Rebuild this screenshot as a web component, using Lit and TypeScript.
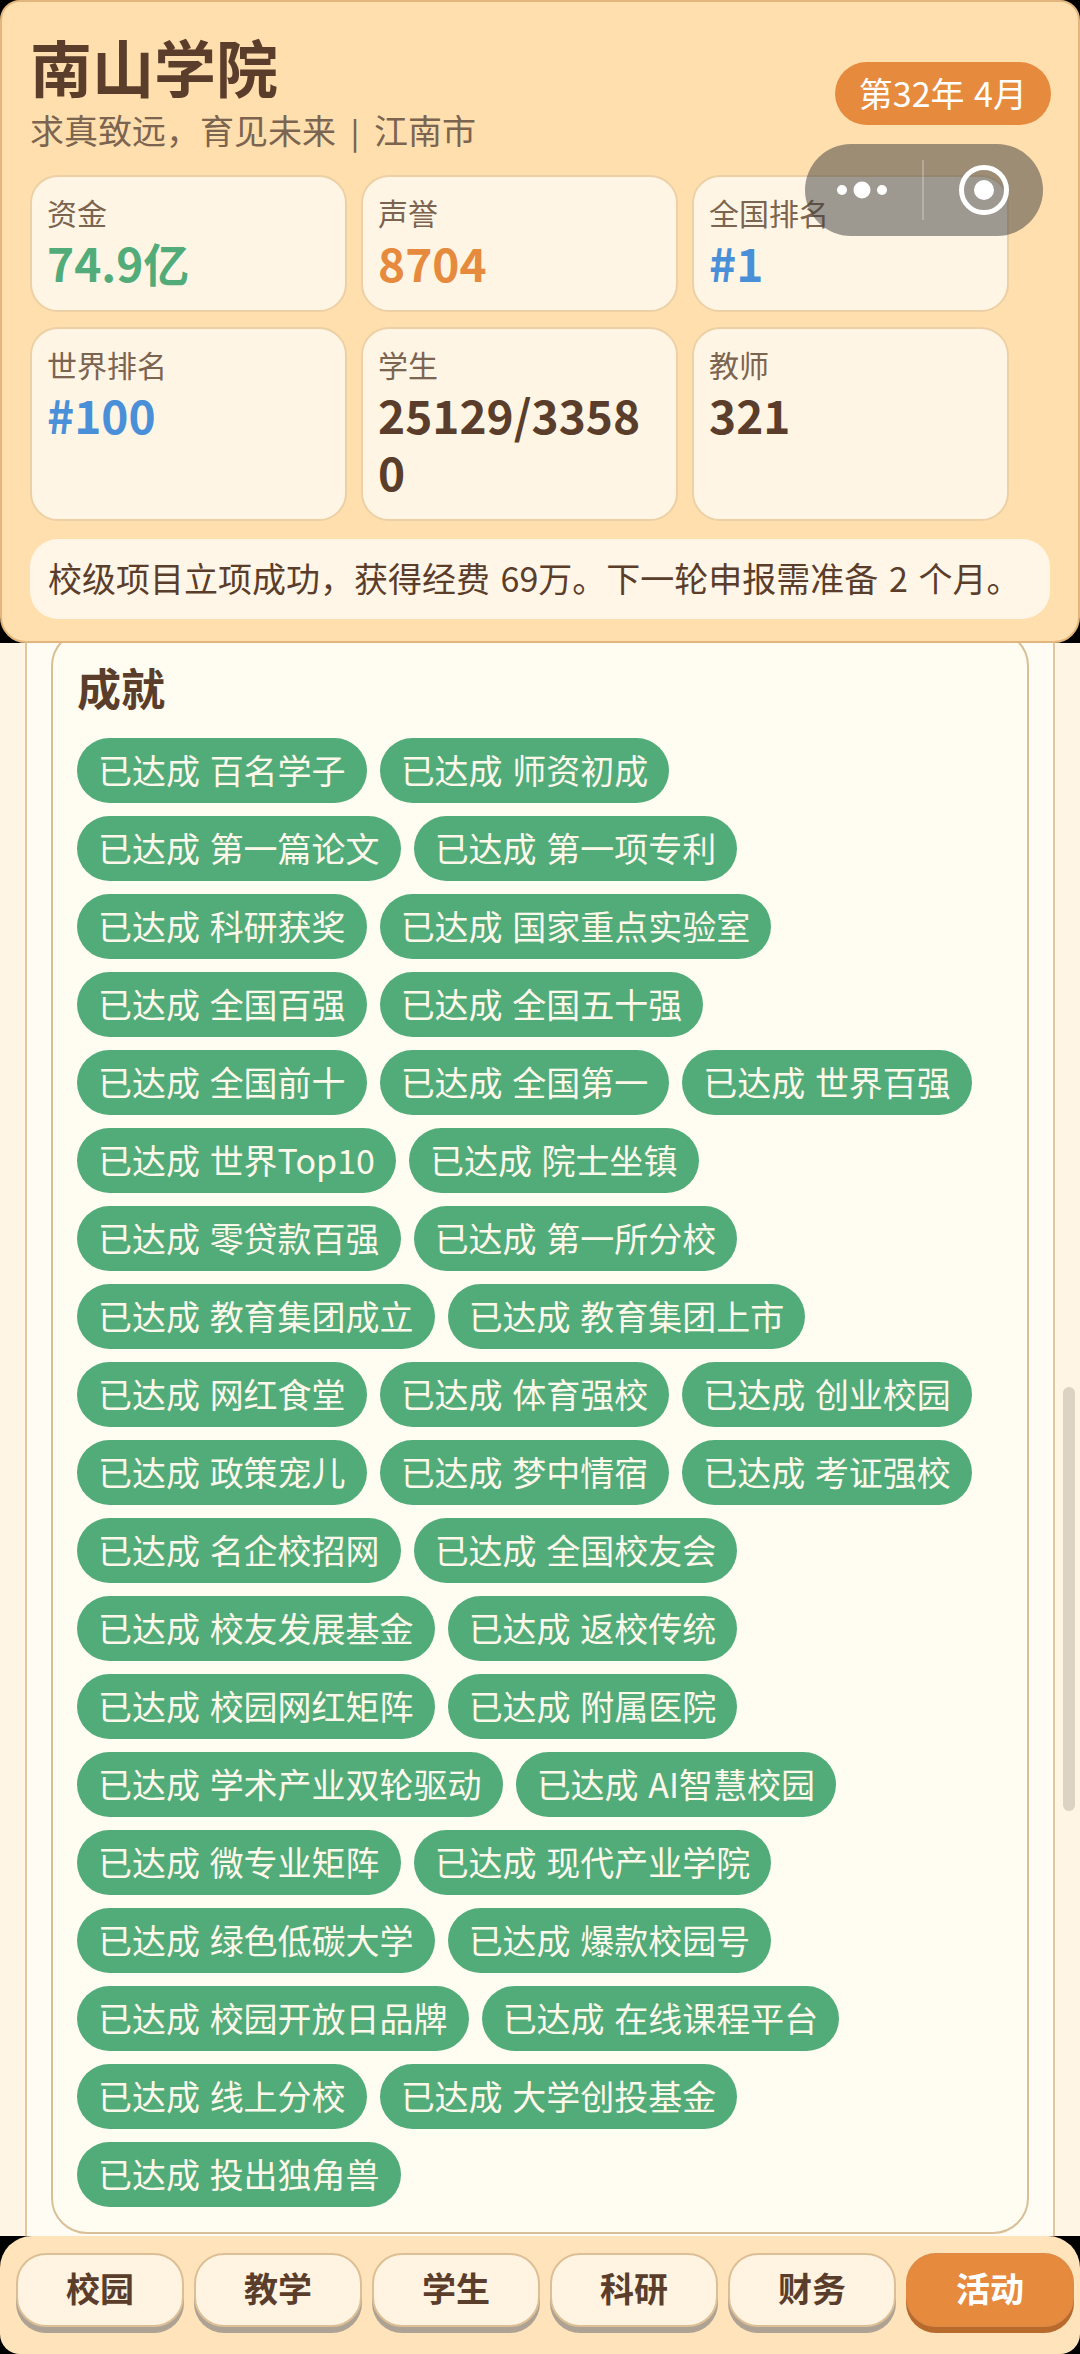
import { LitElement, html, css } from "lit";
import { customElement } from "lit/decorators.js";

const rows: string[] = [
  "百名学子","师资初成","第一篇论文","第一项专利","科研获奖","国家重点实验室","全国百强","全国五十强",
  "全国前十","全国第一","世界百强","世界Top10","院士坐镇","零贷款百强","第一所分校","教育集团成立","教育集团上市",
  "网红食堂","体育强校","创业校园","政策宠儿","梦中情宿","考证强校","名企校招网","全国校友会","校友发展基金","返校传统",
  "校园网红矩阵","附属医院","学术产业双轮驱动","AI智慧校园","微专业矩阵","现代产业学院","绿色低碳大学","爆款校园号",
  "校园开放日品牌","在线课程平台","线上分校","大学创投基金","投出独角兽",
];
const stats = [
  { l: "资金", v: "74.9亿", c: "green" },
  { l: "声誉", v: "8704", c: "orange" },
  { l: "全国排名", v: "#1", c: "blue" },
  { l: "世界排名", v: "#100", c: "blue" },
  { l: "学生", v: "25129/33580", c: "" },
  { l: "教师", v: "321", c: "" },
];
const tabs = ["校园","教学","学生","科研","财务","活动"];

@customElement("app-root")
export class AppRoot extends LitElement {
  static styles = css`
    :host {
      display: block; width: 1080px; height: 2354px; position: relative; overflow: hidden; background: #000;
      font-family: "Noto Sans CJK SC", "Noto Sans", sans-serif; color: #5a3e2b;
    }
    * { box-sizing: border-box; }
    .screen { height: 100%; display: flex; flex-direction: column; }
    header {
      position: relative; z-index: 2; flex: none; height: 643px; background: #ffdfae;
      border: 2px solid #e2b67c; border-radius: 20px 20px 26px 26px; padding: 0 28px;
    }
    .top { display: flex; justify-content: space-between; align-items: flex-start; height: 173px; }
    h1 { margin: 28px 0 0; font-size: 62px; line-height: 72px; font-weight: 700; }
    .sub { margin: 6px 0 0; font-size: 34px; line-height: 44px; color: #7b6450; white-space: nowrap; }
    .bar { display: inline-block; width: 38px; text-align: center; font-size: 30px; font-weight: 500; }
    .when {
      margin: 60px -1px 0 0; height: 63px; padding: 0 24px; border-radius: 32px; background: #e68a3e; color: #fff;
      font-size: 34px; line-height: 61px; word-spacing: 2px; white-space: nowrap;
    }
    .stats { display: grid; grid-template-columns: repeat(3, 317px); gap: 15px 14px; }
    .stat {
      background: #fff5e4; border: 2px solid #ecd0a6; border-radius: 28px; padding: 13px 15px 19px;
      word-break: break-all;
    }
    .stat .l { font-size: 30px; line-height: 44px; color: #7b6450; }
    .stat .v { font-size: 46px; line-height: 57px; font-weight: 700; }
    .green { color: #52ac7a; } .orange { color: #e68a3e; } .blue { color: #4a90d9; }
    .note {
      margin-top: 18px; height: 80px; border-radius: 28px; background: #fff6e8; padding: 0 18px;
      font-size: 34px; line-height: 78px; color: #5a3e2b; white-space: nowrap; word-spacing: 3px;
    }
    .mid { flex: 1; min-height: 0; padding: 0 25px; background: #fff5e4; }
    .panel {
      height: 100%; padding: 0 24px; background: #fffdf3;
      border-left: 2px solid #e3c79f; border-right: 2px solid #e3c79f;
    }
    .card {
      position: relative; top: -13px; height: calc(100% + 11px); background: #fffdf1;
      border: 2px solid #d9bf98; border-radius: 36px; padding: 24px 24px 0;
    }
    h2 { margin: 0 0 20px; font-size: 44px; line-height: 62px; font-weight: 700; }
    .chips { display: flex; flex-wrap: wrap; gap: 13px 13px; }
    .chip {
      height: 65px; padding: 0 21px; border-radius: 33px; background: #52ac7a; color: #fdf8ea;
      font-size: 34px; line-height: 63px; white-space: nowrap; word-spacing: 2px;
    }
    nav {
      flex: none; height: 118px; background: #ffe3ba; border-radius: 32px 32px 20px 20px; padding: 17px 6px 0 16px;
      display: flex; gap: 10px; position: relative; z-index: 2;
    }
    nav .tab {
      width: 168px; height: 74px; border: 2px solid #dcbf94; border-radius: 30px; background: #fff3e2;
      box-shadow: 0 6px 0 #ada294; text-align: center; font-size: 34px; line-height: 65px; font-weight: 700;
    }
    nav .tab.on { background: #e68a3e; border-color: #e08a44; color: #fff; box-shadow: 0 6px 0 #b8692c; }
    .capsule {
      position: absolute; z-index: 5; left: 805px; top: 144px; width: 238px; height: 92px; border-radius: 46px;
      background: rgba(60, 60, 60, 0.5);
    }
    .capsule svg { display: block; }
    .scroll { position: absolute; z-index: 1; left: 1063px; top: 1387px; width: 12px; height: 424px; border-radius: 6px; background: #dcd3c5; }
  `;
  render() {
    return html`
      <div class="screen">
        <header>
          <div class="top">
            <div>
              <h1>南山学院</h1>
              <div class="sub">求真致远，育见未来<span class="bar">|</span>江南市</div>
            </div>
            <div class="when">第32年 4月</div>
          </div>
          <div class="stats">
            ${stats.map((s) => html`<div class="stat"><div class="l">${s.l}</div><div class="v ${s.c}">${s.v}</div></div>`)}
          </div>
          <div class="note">校级项目立项成功，获得经费 69万。下一轮申报需准备 2 个月。</div>
        </header>
        <div class="mid">
          <div class="panel">
            <section class="card">
              <h2>成就</h2>
              <div class="chips">${rows.map((r) => html`<span class="chip">已达成 ${r}</span>`)}</div>
            </section>
          </div>
        </div>
        <nav>${tabs.map((t, i) => html`<div class="tab ${i === 5 ? "on" : ""}">${t}</div>`)}</nav>
      </div>
      <div class="scroll"></div>
      <div class="capsule">
        <svg width="238" height="92" viewBox="0 0 238 92" fill="none">
          <circle cx="37" cy="46" r="5" fill="#fff"/>
          <circle cx="57" cy="46" r="8.5" fill="#fff"/>
          <circle cx="77" cy="46" r="5" fill="#fff"/>
          <rect x="117" y="16" width="2" height="60" fill="rgba(255,255,255,.25)"/>
          <circle cx="179" cy="46" r="22.5" stroke="#fff" stroke-width="5"/>
          <circle cx="179" cy="46" r="10" fill="#fff"/>
        </svg>
      </div>
    `;
  }
}
